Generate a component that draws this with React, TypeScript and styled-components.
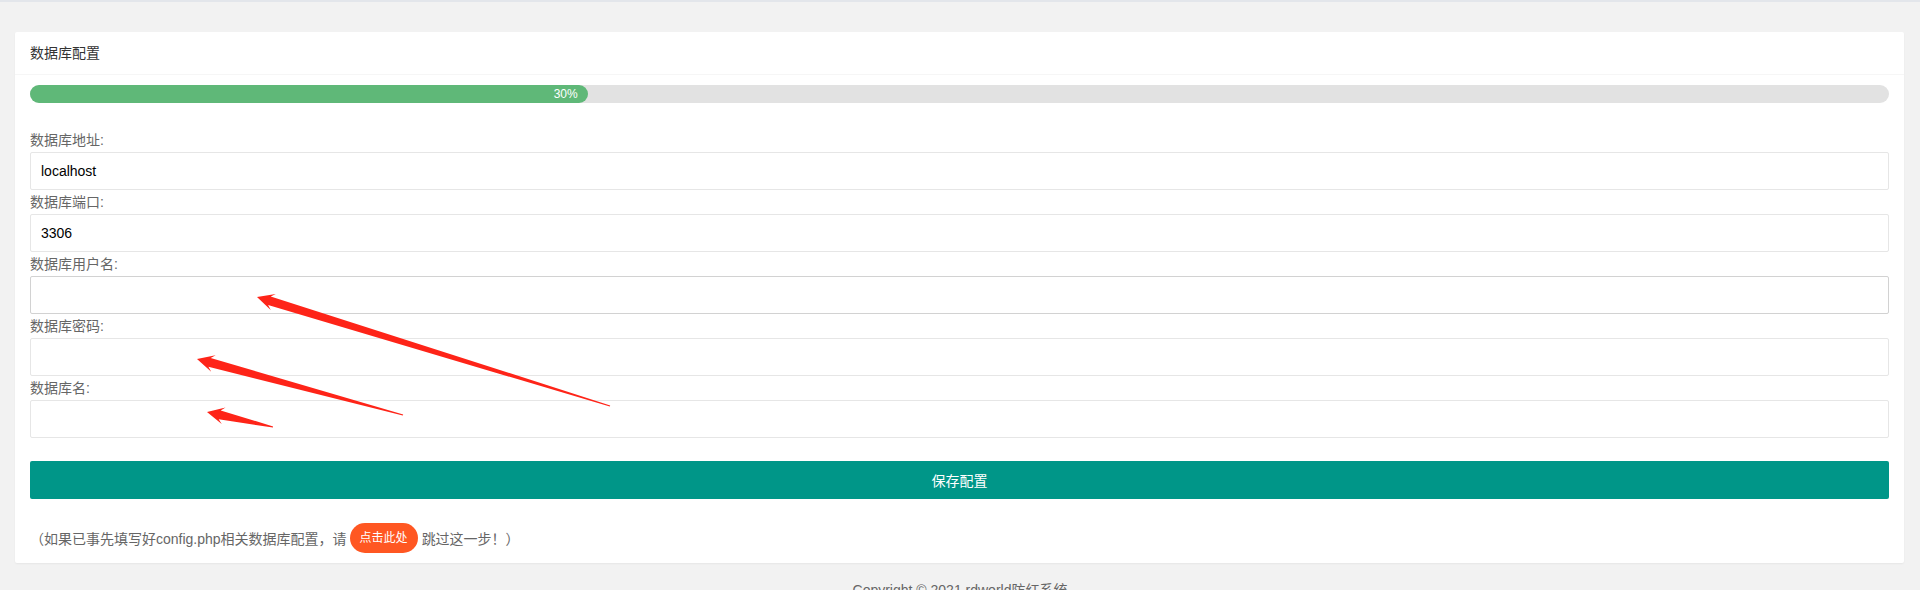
import styled, { createGlobalStyle } from 'styled-components';

const GlobalStyle = createGlobalStyle`
  html, body {
    margin: 0;
    padding: 0;
    background: #f2f2f2;
    font-family: "Liberation Sans", "Noto Sans CJK SC", sans-serif;
    color: #666;
  }
  * {
    box-sizing: border-box;
  }
`;

const Page = styled.div`
  position: relative;
  width: 1920px;
  height: 590px;
  overflow: hidden;
`;

const TopLine = styled.div`
  height: 2px;
  background: #e3e6eb;
`;

const Fluid = styled.div`
  padding: 30px 16px 0 15px;
`;

const Card = styled.div`
  background: #fff;
  border-radius: 2px;
  box-shadow: 0 1px 2px 0 rgba(0, 0, 0, 0.05);
  margin-bottom: 15px;
`;

const CardHeader = styled.div`
  height: 43px;
  line-height: 42px;
  padding: 0 15px;
  border-bottom: 1px solid #f6f6f6;
  color: #333;
  font-size: 14px;
`;

const CardBody = styled.div`
  padding: 10px 15px;
`;

const Progress = styled.div`
  position: relative;
  height: 18px;
  border-radius: 20px;
  background: #e2e2e2;
  margin-bottom: 25px;
`;

const ProgressBar = styled.div`
  height: 18px;
  border-radius: 20px;
  background: #5fb878;
  color: #fff;
  font-size: 12px;
  line-height: 18px;
  text-align: right;
  padding-right: 10px;
`;

const Field = styled.div`
  display: flex;
  flex-direction: column;
`;

const Label = styled.label`
  font-size: 14px;
  line-height: 24px;
  height: 24px;
  color: #666;
`;

const Input = styled.input<{ $hover?: boolean }>`
  height: 38px;
  width: 100%;
  border: 1px solid ${p => (p.$hover ? '#d2d2d2' : '#e6e6e6')};
  border-radius: 2px;
  padding: 0 10px;
  font-size: 14px;
  font-family: "Liberation Sans", "Noto Sans CJK SC", sans-serif;
  color: #000;
  background: #fff;
  outline: none;
`;

const SaveButton = styled.button`
  display: block;
  width: 100%;
  height: 38px;
  margin-top: 23px;
  border: none;
  border-radius: 2px;
  background: #009688;
  color: #fff;
  font-size: 14px;
  font-family: "Liberation Sans", "Noto Sans CJK SC", sans-serif;
  line-height: 38px;
  cursor: pointer;
`;

const Note = styled.div`
  display: flex;
  align-items: center;
  height: 30px;
  margin-top: 24px;
  font-size: 14px;
  color: #666;
  white-space: pre;
`;

const PillButton = styled.span`
  display: inline-block;
  height: 30px;
  line-height: 30px;
  padding: 0 10px;
  margin: 0 4px 0 3px;
  border-radius: 100px;
  background: #ff5722;
  color: #fff;
  font-size: 12px;
`;

const Footer = styled.div`
  text-align: center;
  font-size: 14px;
  line-height: 24px;
  color: #666;
`;

const Overlay = styled.svg`
  position: absolute;
  left: 0;
  top: 0;
  pointer-events: none;
`;

type Pt = [number, number];

const arrowPoints = (tip: Pt, tail: Pt) => {
  const dx = tail[0] - tip[0];
  const dy = tail[1] - tip[1];
  const len = Math.hypot(dx, dy);
  const bx = dx / len;
  const by = dy / len;
  const nx = -by;
  const ny = bx;
  const at = (along: number, perp: number) =>
    `${(tip[0] + bx * along + nx * perp).toFixed(1)},${(tip[1] + by * along + ny * perp).toFixed(1)}`;
  return [
    at(0, 0),
    at(17, -8.5),
    at(13, -4.5),
    at(len, -0.6),
    at(len, 0.6),
    at(13, 4.5),
    at(17, 8.5),
  ].join(' ');
};

const arrows: { tip: Pt; tail: Pt }[] = [
  { tip: [257, 297], tail: [610, 406] },
  { tip: [197, 359], tail: [403, 415] },
  { tip: [207, 412], tail: [273, 427] },
];

const fields = [
  { label: '数据库地址:', value: 'localhost' },
  { label: '数据库端口:', value: '3306' },
  { label: '数据库用户名:', value: '', hover: true },
  { label: '数据库密码:', value: '' },
  { label: '数据库名:', value: '' },
];

export default function App() {
  return (
    <Page>
      <GlobalStyle />
      <TopLine />
      <Fluid>
        <Card>
          <CardHeader>数据库配置</CardHeader>
          <CardBody>
            <Progress>
              <ProgressBar style={{ width: '30%' }}>30%</ProgressBar>
            </Progress>
            {fields.map(f => (
              <Field key={f.label}>
                <Label>{f.label}</Label>
                <Input $hover={f.hover} defaultValue={f.value} />
              </Field>
            ))}
            <SaveButton>保存配置</SaveButton>
            <Note>
              （如果已事先填写好config.php相关数据库配置，请
              <PillButton>点击此处</PillButton>
              跳过这一步！）
            </Note>
          </CardBody>
        </Card>
      </Fluid>
      <Footer>Copyright © 2021 rdworld防红系统</Footer>
      <Overlay width="1920" height="590" viewBox="0 0 1920 590">
        {arrows.map((a, i) => (
          <polygon key={i} points={arrowPoints(a.tip, a.tail)} fill="#fe2418" />
        ))}
      </Overlay>
    </Page>
  );
}
